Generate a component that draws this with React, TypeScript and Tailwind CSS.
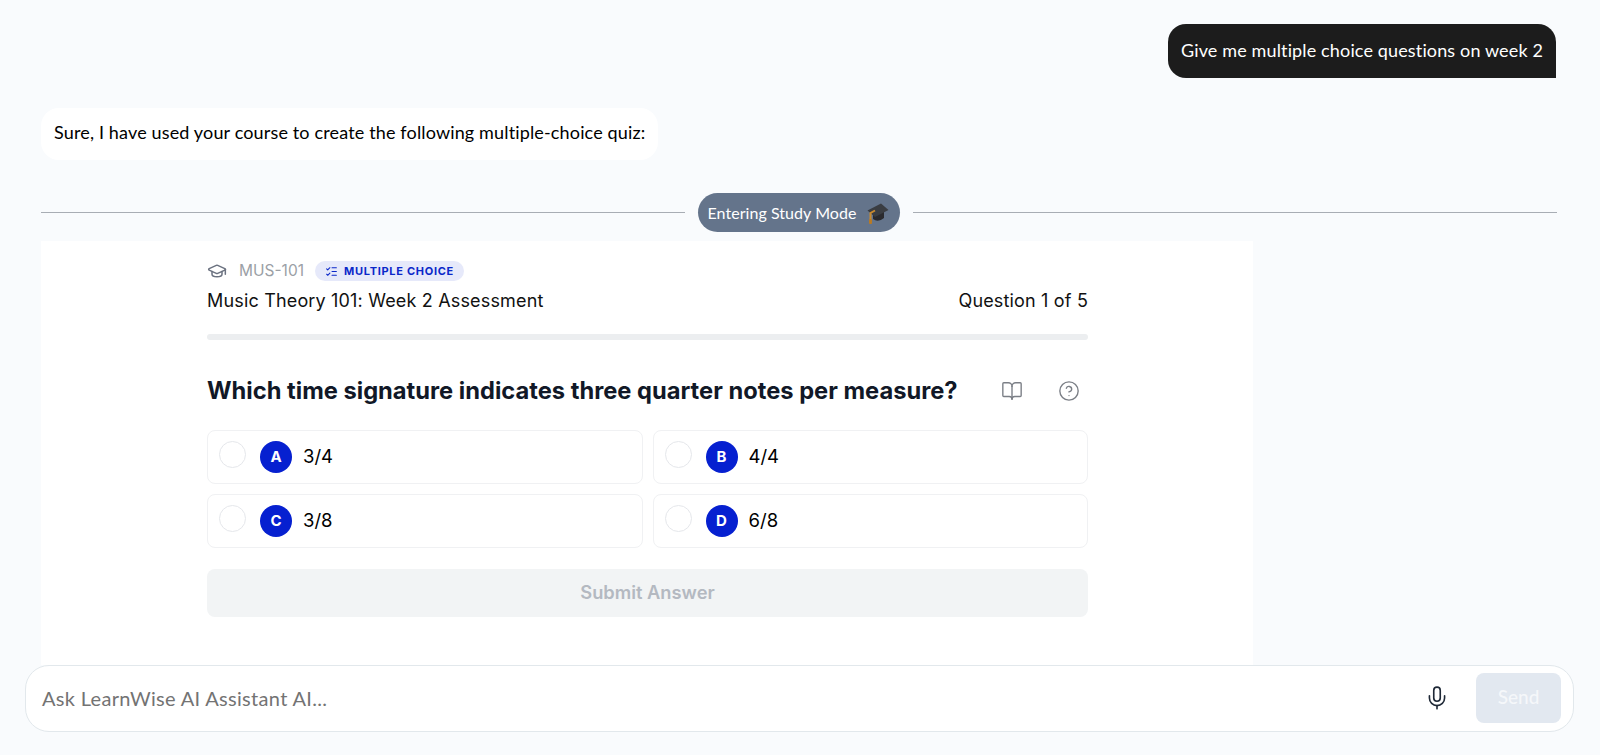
import { GraduationCap, ListChecks, BookOpen, CircleHelp, Mic } from "lucide-react";

function CapEmoji() {
  return (
    <svg width="24" height="24" viewBox="0 0 24 24" className="shrink-0">
      <path d="M7 12 L7 18 Q12 22 18 17 L18 11 Z" fill="#2a2a2e" />
      <path d="M1.5 9.5 L15 2.5 L22.5 9 L9 16 Z" fill="#3a3d42" />
      <path d="M9 9.5 L4.5 12 L4.5 20" stroke="#c98a2e" strokeWidth="2" fill="none" />
      <rect x="3" y="18" width="3" height="5" rx="1" fill="#b87a24" />
    </svg>
  );
}

function Option({ letter, text }: { letter: string; text: string }) {
  return (
    <div className="h-[54px] flex items-start gap-[14px] pl-[11px] pt-[10px] bg-white border border-[#f0f1f3] rounded-lg">
      <div className="w-[27px] h-[27px] rounded-full border border-[#e5e7eb] bg-white" />
      <div className="flex items-center gap-[11px]">
        <div className="w-[32px] h-[32px] rounded-full bg-[#0620d0] text-white flex items-center justify-center text-[15px] font-bold font-['Inter']">
          {letter}
        </div>
        <span className="text-[18.5px] text-black font-['Inter']">{text}</span>
      </div>
    </div>
  );
}

export default function App() {
  return (
    <div className="h-[755px] overflow-hidden bg-[#f9fbfd] flex flex-col font-['Lato',sans-serif]">
      <div className="flex-1 min-h-0 overflow-hidden flex flex-col pl-[41px] pr-[44px] pt-[24px]">
        <div className="flex justify-end">
          <div className="h-[54px] w-[388px] pb-[2px] flex items-center justify-center bg-[#1c1c1c] text-white text-[18px] tracking-[0.14px] rounded-[18px] rounded-br-none">
            Give me multiple choice questions on week 2
          </div>
        </div>
        <div className="mt-[30px] flex">
          <div className="h-[52px] w-[617px] pb-[3px] flex items-center pl-[13px] bg-white text-black text-[18px] tracking-[0.15px] rounded-[18px]">
            Sure, I have used your course to create the following multiple-choice quiz:
          </div>
        </div>
        <div className="mt-[33px] -mr-px flex items-center gap-[13px]">
          <div className="flex-1 h-px bg-[#a8adb4]" />
          <div className="h-[39px] w-[202px] flex items-center justify-center gap-[10px] rounded-full bg-[#64748b] text-white text-[16px] tracking-[0.05px]">
            <span>Entering Study Mode</span>
            <CapEmoji />
          </div>
          <div className="flex-1 h-px bg-[#a8adb4]" />
        </div>
        <div className="mt-[9px] w-[1212px] flex-1 bg-white pl-[166px] pr-[165px] pt-[20px] font-['Inter']">
          <div className="h-[20px] flex items-center">
            <GraduationCap className="w-[20px] h-[20px] text-[#6b7280]" strokeWidth={1.8} />
            <span className="ml-[12px] text-[15.5px] text-[#9b9fa6]">MUS-101</span>
            <div className="ml-[11px] h-[20px] w-[149px] flex items-center justify-center gap-[6px] rounded-full bg-[#e6e9fa] text-[#0a27c9] text-[11px] font-bold tracking-[0.7px]">
              <ListChecks className="w-[13px] h-[13px]" strokeWidth={2} />
              <span>MULTIPLE CHOICE</span>
            </div>
          </div>
          <div className="mt-[7px] flex items-center justify-between text-[18px] tracking-[0.17px] text-[#111] h-[24px]">
            <span>Music Theory 101: Week 2 Assessment</span>
            <span>Question 1 of 5</span>
          </div>
          <div className="mt-[22px] h-[6px] bg-[#eceef0] rounded-sm" />
          <div className="mt-[31px] h-[40px] flex items-center justify-between">
            <span className="text-[23.7px] font-bold text-[#111827]">Which time signature indicates three quarter notes per measure?</span>
            <div className="flex items-center gap-[35px] pr-[8px]">
              <BookOpen className="w-[22px] h-[22px] text-[#7b7f86]" strokeWidth={1.5} />
              <CircleHelp className="w-[22px] h-[22px] text-[#7b7f86]" strokeWidth={1.5} />
            </div>
          </div>
          <div className="mt-[19px] grid grid-cols-2 gap-[10px]">
            <Option letter="A" text="3/4" />
            <Option letter="B" text="4/4" />
            <Option letter="C" text="3/8" />
            <Option letter="D" text="6/8" />
          </div>
          <div className="mt-[21px] h-[48px] rounded-lg bg-[#f2f4f5] flex items-center justify-center text-[18.3px] font-semibold text-[#b4b9c1]">
            Submit Answer
          </div>
        </div>
      </div>
      <div className="h-[90px] shrink-0 pl-[25px] pr-[26px] pt-0">
        <div className="h-[67px] pb-[2px] flex items-center pl-[16px] pr-[12px] bg-white border border-[#e2e8ec] rounded-[24px]">
          <span className="flex-1 text-[20px] tracking-[0.32px] text-[#737373]">Ask LearnWise AI Assistant AI...</span>
          <Mic className="w-[26px] h-[26px] text-[#1f2937]" strokeWidth={1.5} />
          <div className="ml-[26px] w-[85px] h-[50px] rounded-lg bg-[#e2e8f0] text-[#f5f7fa] text-[19px] font-medium flex items-center justify-center">
            Send
          </div>
        </div>
      </div>
    </div>
  );
}
